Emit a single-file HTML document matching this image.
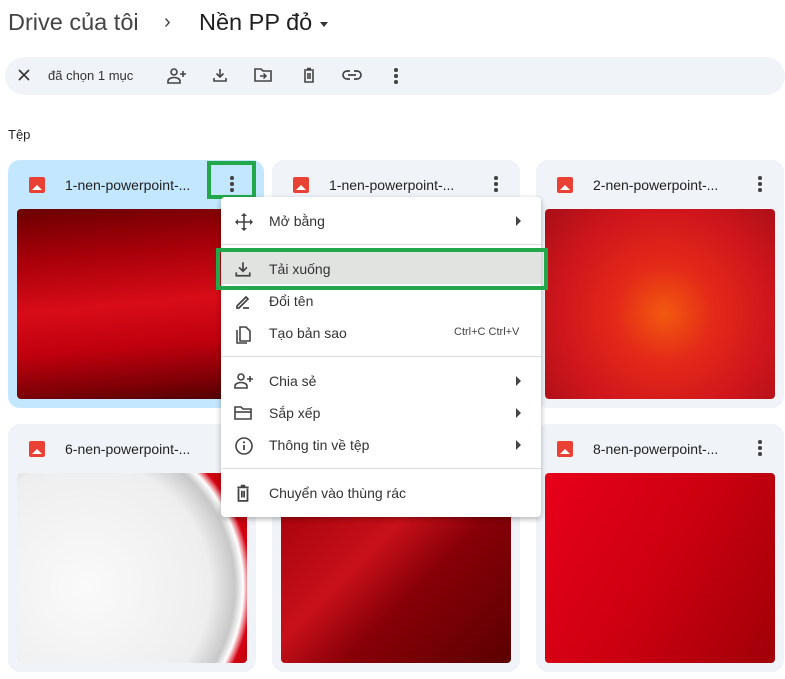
<!DOCTYPE html>
<html><head><meta charset="utf-8"><style>
*{box-sizing:border-box;margin:0;padding:0}
body{width:785px;height:679px;overflow:hidden;background:#fff;font-family:"Liberation Sans","Noto Sans CJK SC",sans-serif;color:#1f1f1f;position:relative}
.a{position:absolute}
.card{position:absolute;width:248px;height:248px;background:#f0f4f9;border-radius:12px}
.card.sel{background:#c2e7ff}
.card .ic{position:absolute;left:21px;top:17px;width:16px;height:16px;background:#e94235;border-radius:2px}
.card .ic:after{content:"";position:absolute;left:3px;bottom:3px;border-left:5px solid transparent;border-right:5px solid transparent;border-bottom:5px solid #fff}
.card .nm{position:absolute;left:57px;top:17px;font-size:14px;color:#1f1f1f}
.card .dots{position:absolute;left:222px;top:16px;width:4px}
.dots i{display:block;width:3.5px;height:3.5px;background:#444;border-radius:50%;margin-bottom:2.5px}
.card .img{position:absolute;left:9px;top:49px;width:230px;height:190px;border-radius:4px;overflow:hidden}
.menu{position:absolute;left:221px;top:197px;width:320px;height:320px;background:#fff;border-radius:4px;box-shadow:0 2px 6px rgba(0,0,0,.3)}
.mi{position:absolute;left:0;width:320px;height:32px;font-size:14px;color:#333}
.mi span{position:absolute;left:48px;top:8px}
.mi svg{position:absolute;left:13px;top:7px}
.mi .arr{position:absolute;left:295px;top:11px;border-top:5px solid transparent;border-bottom:5px solid transparent;border-left:5px solid #444}
.sep{position:absolute;left:0;width:320px;height:1px;background:#dadce0}
.tb svg{position:absolute;top:67px}
</style></head><body>
<div class="a" style="left:8px;top:9px;font-size:23.5px;color:#444">Drive của tôi</div>
<div class="a" style="left:164px;top:11px;font-size:20px;color:#444">›</div>
<div class="a" style="left:199px;top:9px;font-size:23.5px;color:#1f1f1f">Nền PP đỏ</div>
<div class="a" style="left:320px;top:22px;border-left:4px solid transparent;border-right:4px solid transparent;border-top:5px solid #333"></div>

<div class="a" style="left:5px;top:57px;width:780px;height:38px;background:#f0f4f9;border-radius:19px"></div>
<div class="tb">
<svg style="left:16px" width="16" height="16" viewBox="0 0 16 16"><path d="M3 3L13 13M13 3L3 13" stroke="#333" stroke-width="1.6"/></svg>
<div class="a" style="left:48px;top:68px;font-size:13px;color:#333">đã chọn 1 mục</div>
<svg style="left:167px" width="20" height="18" viewBox="0 0 20 18"><circle cx="7" cy="5" r="3" fill="none" stroke="#444" stroke-width="1.6"/><path d="M1 16v-2c0-2 3-3.5 6-3.5s6 1.5 6 3.5v2z" fill="none" stroke="#444" stroke-width="1.6"/><path d="M16 4v6M13 7h6" stroke="#444" stroke-width="1.6"/></svg>
<svg style="left:212px" width="16" height="16" viewBox="0 0 16 16"><path d="M8 2v8M4.5 6.5L8 10l3.5-3.5M2 11v3h12v-3" fill="none" stroke="#444" stroke-width="1.6"/></svg>
<svg style="left:254px" width="18" height="16" viewBox="0 0 18 16"><path d="M1 2h6l2 2h8v10H1z" fill="none" stroke="#444" stroke-width="1.6"/><path d="M6 9h6M9.5 6.5L12 9l-2.5 2.5" fill="none" stroke="#444" stroke-width="1.5"/></svg>
<svg style="left:301px" width="16" height="16" viewBox="0 0 16 16"><path d="M3 3h10M6 1.5h4M4 4v11h8V4M7 6v6M9 6v6" fill="none" stroke="#444" stroke-width="1.6"/></svg>
<svg style="left:342px" width="20" height="16" viewBox="0 0 20 16"><path d="M8 4H5a4 4 0 0 0 0 8h3M12 4h3a4 4 0 0 1 0 8h-3M6 8h8" fill="none" stroke="#444" stroke-width="1.7"/></svg>
<div class="a dots" style="left:394px;top:68px;width:4px"><i></i><i></i><i></i></div>
</div>

<div class="a" style="left:8px;top:127px;font-size:13px;color:#1f1f1f">Tệp</div>

<div class="card sel" style="left:8px;top:160px;width:256px"><div class="ic"></div><div class="nm">1-nen-powerpoint-...</div><div class="dots"><i></i><i></i><i></i></div>
<div class="img" style="width:238px;height:190px;background:linear-gradient(175deg,#6a0000 0%,#a8000a 25%,#d80c18 50%,#c0000e 70%,#800006 88%,#4a0000 100%)"></div></div>
<div class="card" style="left:272px;top:160px"><div class="ic"></div><div class="nm">1-nen-powerpoint-...</div><div class="dots"><i></i><i></i><i></i></div></div>
<div class="card" style="left:536px;top:160px"><div class="ic"></div><div class="nm">2-nen-powerpoint-...</div><div class="dots"><i></i><i></i><i></i></div>
<div class="img" style="background:radial-gradient(circle at 52% 55%,#f25a10 0%,#e42a18 30%,#d0161c 65%,#a80e18 100%)"></div></div>

<div class="card" style="left:8px;top:424px"><div class="ic"></div><div class="nm">6-nen-powerpoint-...</div>
<div class="img" style="background:radial-gradient(ellipse 90% 110% at 30% 60%,#fafafa 0%,#eee 60%,#c8c8c8 72%,#fff 76%,#d40010 80%,#a8000c 90%,#e01020 100%)"></div></div>
<div class="card" style="left:272px;top:424px"><div class="ic"></div><div class="nm">7-nen-powerpoint-...</div>
<div class="img" style="background:linear-gradient(135deg,#a0000a 0%,#c8101a 40%,#880008 60%,#5a0000 100%)"></div></div>
<div class="card" style="left:536px;top:424px"><div class="ic"></div><div class="nm">8-nen-powerpoint-...</div><div class="dots"><i></i><i></i><i></i></div>
<div class="img" style="background:linear-gradient(120deg,#e8001a 0%,#cc0010 50%,#a00008 100%)"></div></div>

<div class="a" style="left:207px;top:161px;width:49px;height:38px;border:4px solid #22a84a"></div>

<div class="menu">
<div class="mi" style="top:8px"><svg width="20" height="20" viewBox="0 0 20 20"><path d="M10 1l3 3h-6zM10 19l3-3h-6zM1 10l3-3v6zM19 10l-3-3v6z" fill="#444"/><path d="M10 4v12M4 10h12" stroke="#444" stroke-width="1.6"/></svg><span>Mở bằng</span><i class="arr"></i></div>
<div class="sep" style="top:47px"></div>
<div class="a" style="left:0;top:55px;width:320px;height:32px;background:#e1e3e1"></div>
<div class="mi" style="top:56px"><svg width="18" height="18" viewBox="0 0 16 16"><path d="M8 2v8M4.5 6.5L8 10l3.5-3.5M2 11v3h12v-3" fill="none" stroke="#444" stroke-width="1.5"/></svg><span>Tải xuống</span></div>
<div class="mi" style="top:88px"><svg width="18" height="18" viewBox="0 0 18 18"><path d="M3 14L12 5l2 2-9 9H3zM9 16h6" fill="none" stroke="#444" stroke-width="1.7"/></svg><span>Đổi tên</span></div>
<div class="mi" style="top:120px"><svg width="18" height="20" viewBox="0 0 18 20"><path d="M6 3h6l4 4v10H6zM3 6v13h10" fill="none" stroke="#444" stroke-width="1.6"/></svg><span>Tạo bản sao</span><div class="a" style="left:233px;top:9px;font-size:11px;color:#444">Ctrl+C Ctrl+V</div></div>
<div class="sep" style="top:159px"></div>
<div class="mi" style="top:168px"><svg width="20" height="18" viewBox="0 0 20 18"><circle cx="7" cy="5" r="3" fill="none" stroke="#444" stroke-width="1.6"/><path d="M1 16v-2c0-2 3-3.5 6-3.5s6 1.5 6 3.5v2z" fill="none" stroke="#444" stroke-width="1.6"/><path d="M16 4v6M13 7h6" stroke="#444" stroke-width="1.6"/></svg><span>Chia sẻ</span><i class="arr"></i></div>
<div class="mi" style="top:200px"><svg width="20" height="18" viewBox="0 0 20 18"><path d="M1 3h6l2 2h8v10H1z" fill="none" stroke="#444" stroke-width="1.6"/><path d="M1 8h16" stroke="#444" stroke-width="1.6"/></svg><span>Sắp xếp</span><i class="arr"></i></div>
<div class="mi" style="top:232px"><svg width="20" height="20" viewBox="0 0 20 20"><circle cx="10" cy="10" r="8" fill="none" stroke="#444" stroke-width="1.6"/><path d="M10 9v5" stroke="#444" stroke-width="1.8"/><circle cx="10" cy="6.3" r="1.1" fill="#444"/></svg><span>Thông tin về tệp</span><i class="arr"></i></div>
<div class="sep" style="top:271px"></div>
<div class="mi" style="top:280px"><svg width="18" height="18" viewBox="0 0 16 16"><path d="M3 3h10M6 1.5h4M4 4v11h8V4M7 6v6M9 6v6" fill="none" stroke="#444" stroke-width="1.6"/></svg><span>Chuyển vào thùng rác</span></div>
</div>
<div class="a" style="left:216px;top:248px;width:332px;height:42px;border:4px solid #22a84a"></div>
</body></html>
